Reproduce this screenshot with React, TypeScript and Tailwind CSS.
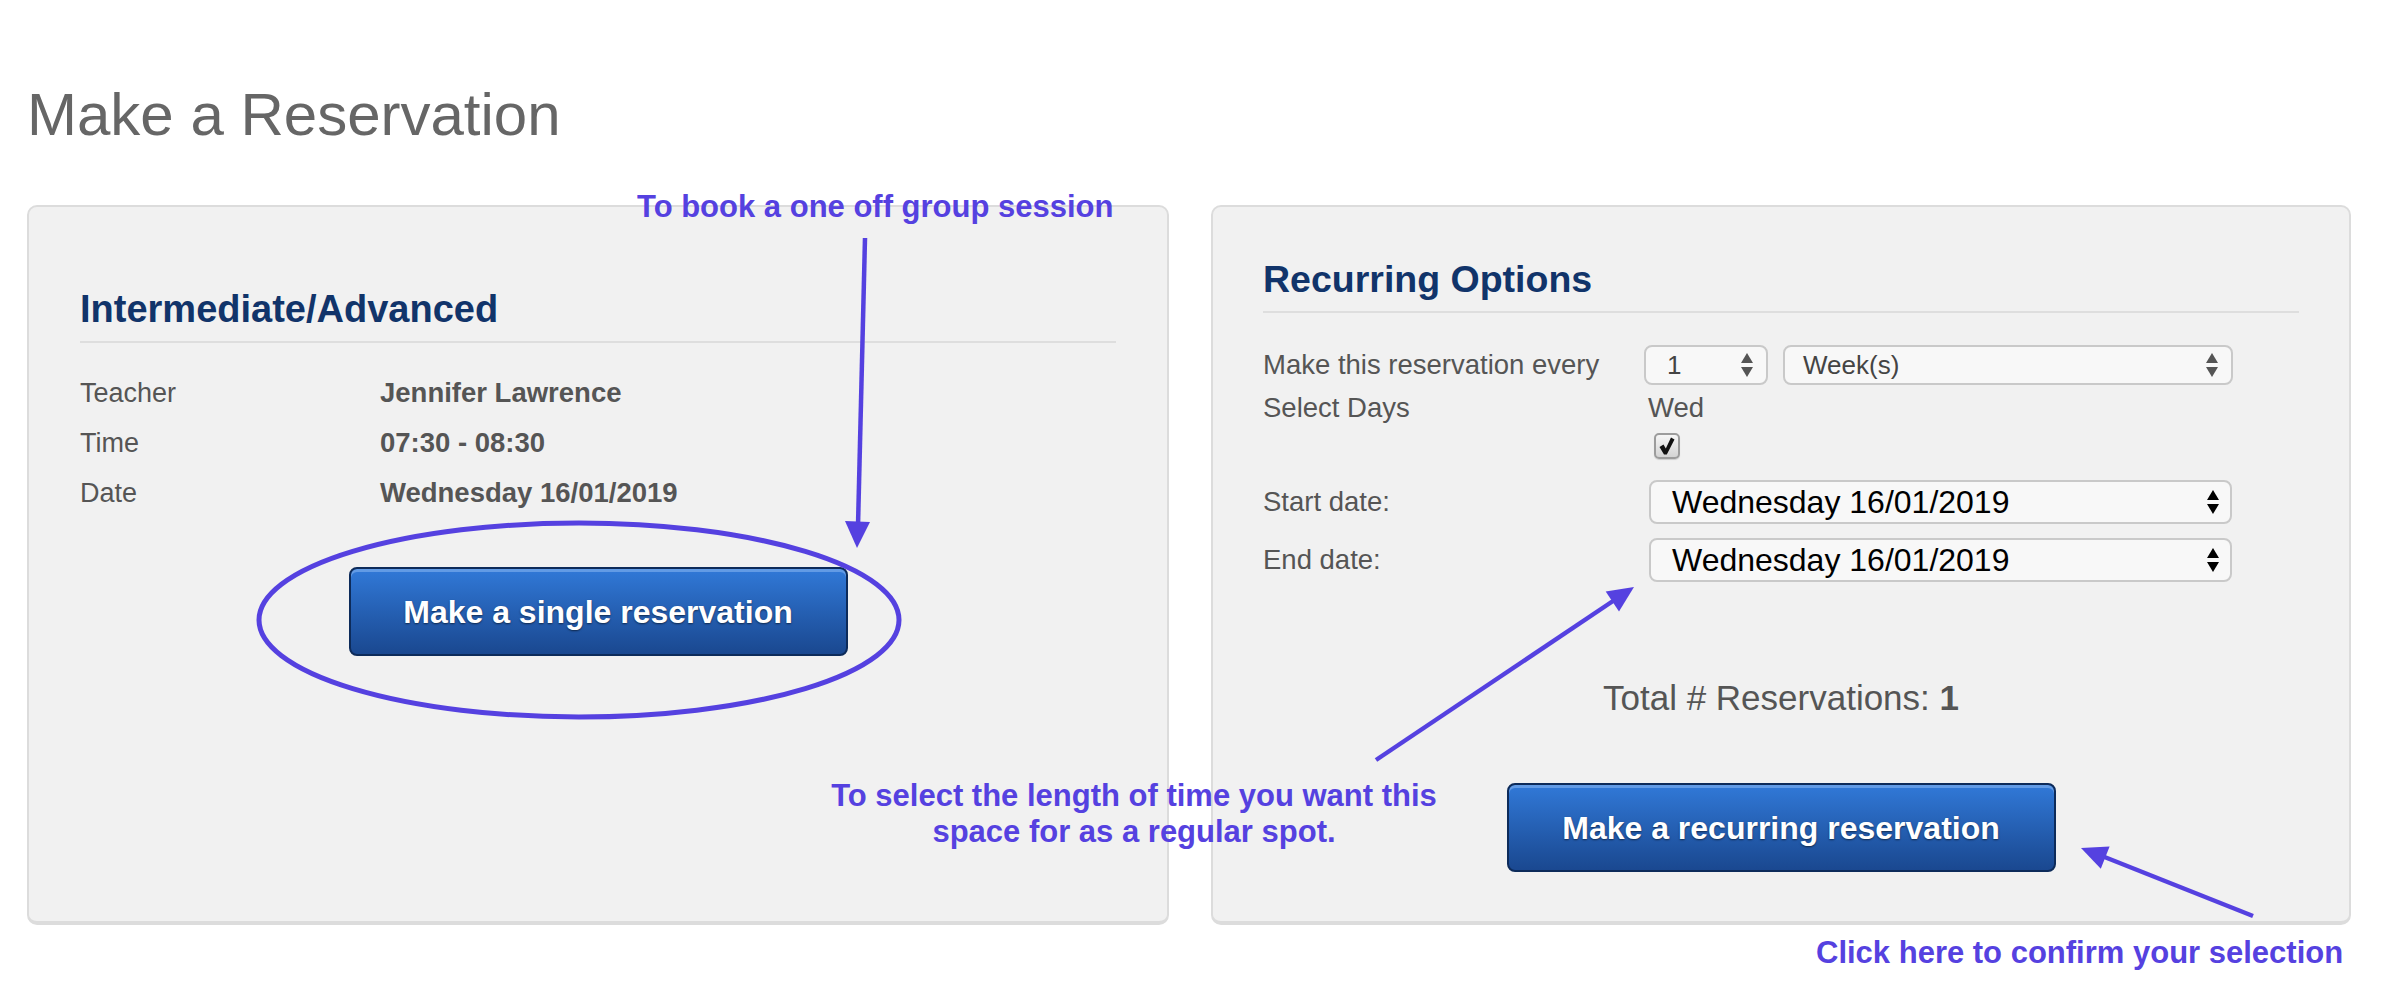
import React from "react";

const font = "font-['Liberation_Sans',Helvetica,Arial,sans-serif]";

function Arrows({ dark }: { dark?: boolean }) {
  return (
    <svg width="14" height="26" viewBox="0 0 14 26" className={dark ? "text-black" : "text-[#555]"}>
      <path d="M7 1 L13 11 L1 11 Z" fill="currentColor" />
      <path d="M7 25 L13 15 L1 15 Z" fill="currentColor" />
    </svg>
  );
}

function Field({ children, className }: { children: React.ReactNode; className: string }) {
  return (
    <div
      className={`flex items-center justify-between rounded-[8px] border-2 border-[#c9c9c9] bg-[#f8f8f8] ${className}`}
    >
      {children}
    </div>
  );
}

function BigButton({ label, className }: { label: string; className: string }) {
  return (
    <button
      type="button"
      className={`mx-auto flex h-[89px] items-center justify-center rounded-[8px] border-2 border-[#0d2b5a] bg-linear-to-b from-[#3179d8] to-[#1a4890] text-[32px] font-bold text-white shadow-[inset_0_3px_0_rgba(120,170,235,0.7)] [text-shadow:0_1px_2px_rgba(0,0,0,0.55)] ${className}`}
    >
      {label}
    </button>
  );
}

export default function App() {
  return (
    <div className={`relative h-[986px] w-full overflow-hidden bg-white ${font}`}>
      <div className="px-[27px]">
        <h1 className="mt-[85px] h-[60px] text-[60px] leading-[60px] font-normal text-[#666]">
          Make a Reservation
        </h1>

        <div className="mt-[60px] flex gap-[42px]">
          {/* single session */}
          <section className="h-[720px] w-[1142px] rounded-[10px] border-2 border-b-[4px] border-[#dcdcdc] bg-[#f1f1f1] px-[51px] pt-[84px]">
            <h2 className="text-[38px] leading-[37px] font-bold text-[#11346a]">Intermediate/Advanced</h2>
            <div className="mt-[13px] h-[2px] bg-[#dedede]" />
            <dl className="mt-[25px] text-[27px] leading-[50px] text-[#555]">
              {[
                ["Teacher", "Jennifer Lawrence"],
                ["Time", "07:30 - 08:30"],
                ["Date", "Wednesday 16/01/2019"],
              ].map(([k, v]) => (
                <div key={k} className="flex">
                  <dt className="w-[300px]">{k}</dt>
                  <dd className="text-[27.5px] font-bold">{v}</dd>
                </div>
              ))}
            </dl>
            <BigButton label="Make a single reservation" className="mt-[49px] w-[499px]" />
          </section>

          {/* recurring */}
          <section className="h-[720px] w-[1140px] rounded-[10px] border-2 border-b-[4px] border-[#dcdcdc] bg-[#f1f1f1] pr-[50px] pl-[50px] pt-[54px]">
            <h2 className="text-[37.5px] leading-[37px] font-bold text-[#11346a]">Recurring Options</h2>
            <div className="mt-[13px] h-[2px] bg-[#dedede]" />

            <div className="mt-[32px] flex h-[40px] items-center text-[27.5px] text-[#555]">
              <span className="w-[381px] leading-[36px]">Make this reservation every</span>
              <Field className="h-[40px] w-[124px] pr-[12px] pl-[21px]">
                <span className="text-[26px] text-[#444]">1</span>
                <Arrows />
              </Field>
              <Field className="ml-[15px] h-[40px] w-[450px] pr-[12px] pl-[18px]">
                <span className="text-[26px] text-[#444]">Week(s)</span>
                <Arrows />
              </Field>
            </div>

            <div className="mt-[8px] flex text-[27.5px] leading-[30px] text-[#555]">
              <span className="w-[384px]">Select Days</span>
              <span className="pl-[1px]">Wed</span>
            </div>
            <div className="mt-[10px] ml-[391px] flex h-[26px] w-[26px] items-center justify-center rounded-[5px] border-2 border-[#9c9c9c] bg-linear-to-b from-[#f6f6f6] to-[#d4d4d4] shadow-[0_1px_1px_rgba(0,0,0,0.15)]">
              <svg width="16" height="18" viewBox="0 0 16 18">
                <path d="M0.5 10 L4.5 7.5 L6.8 11.5 L12 0.5 L15.5 2.5 L7.8 17.5 L5 17.5 Z" fill="#111" />
              </svg>
            </div>

            {["Start date:", "End date:"].map((label, i) => (
              <div
                key={label}
                className={`flex h-[44px] items-center text-[27.5px] text-[#555] ${i === 0 ? "mt-[21px]" : "mt-[14px]"}`}
              >
                <span className="w-[386px] leading-[36px]">{label}</span>
                <Field className="h-[44px] w-[583px] pr-[10px] pl-[21px]">
                  <span className="text-[32px] text-black">Wednesday 16/01/2019</span>
                  <Arrows dark />
                </Field>
              </div>
            ))}

            <p className="mt-[98px] text-center text-[35px] leading-[35px] text-[#555]">
              Total # Reservations: <b>1</b>
            </p>
            <BigButton label="Make a recurring reservation" className="mt-[68px] w-[549px]" />
          </section>
        </div>
      </div>

      {/* annotations */}
      <svg
        className="pointer-events-none absolute inset-0 h-full w-full"
        viewBox="0 0 2386 986"
        preserveAspectRatio="none"
      >
        <g stroke="#5541e0" strokeWidth="4.5" fill="none">
          <line x1="865" y1="238" x2="858" y2="526" />
          <ellipse cx="579" cy="620" rx="320" ry="97" strokeWidth="5" />
          <line x1="1376" y1="760" x2="1616" y2="599" />
          <line x1="2253" y1="916" x2="2102" y2="856" />
        </g>
        <g fill="#5541e0">
          <polygon points="857,548 845,521 870,522" />
          <polygon points="1634,587 1619,611.5 1605.7,591.5" />
          <polygon points="2081,848 2109.6,846.4 2100.8,868.8" />
        </g>
      </svg>
      <p className="absolute top-[191px] left-[637px] text-[31px] leading-[31px] font-bold text-[#5541e0]">
        To book a one off group session
      </p>
      <p className="absolute top-[778px] left-[794px] w-[680px] text-center text-[31px] leading-[36px] font-bold whitespace-nowrap text-[#5541e0]">
        To select the length of time you want this
        <br />
        space for as a regular spot.
      </p>
      <p className="absolute top-[937px] left-[1816px] text-[31px] leading-[31px] font-bold whitespace-nowrap text-[#5541e0]">
        Click here to confirm your selection
      </p>
    </div>
  );
}
